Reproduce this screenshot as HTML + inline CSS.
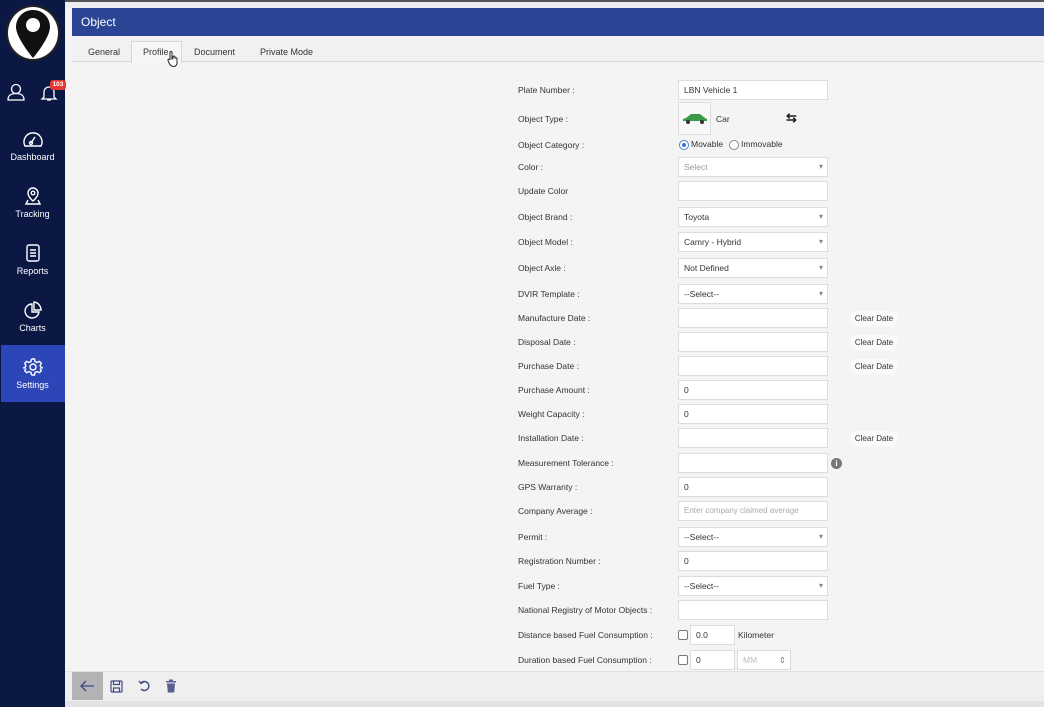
<!DOCTYPE html>
<html><head><meta charset="utf-8"><style>
*{box-sizing:border-box;margin:0;padding:0}
body{width:1044px;height:707px;overflow:hidden;background:#f4f4f5;font-family:"Liberation Sans",sans-serif;position:relative;color:#333}
.a{position:absolute}
.sb{left:0;top:0;width:65px;height:707px;background:#0b1844}
.nav{position:absolute;left:0;width:65px;text-align:center;color:#fff;font-size:9px}
.lbl{position:absolute;left:518px;font-size:8.5px;color:#333;line-height:12px}
.in{position:absolute;left:678px;width:150px;height:20px;background:#fff;border:1px solid #dcdcdc;font-size:8.5px;line-height:18px;padding-left:5px;color:#333}
.sel::after{content:"▾";position:absolute;right:4px;top:0;font-size:8px;color:#888}
.cd{position:absolute;left:850px;width:48px;height:15px;background:#fafafa;border-radius:7px;font-size:8px;line-height:15px;text-align:center;color:#333}
</style></head><body>
<div class="a" style="left:0;top:0;width:1044px;height:2px;background:#555"></div>
<div class="a" style="left:65px;top:2px;width:979px;height:6px;background:#eceef4"></div>
<div class="a sb"></div>
<div class="a" style="left:6px;top:5px;width:54px;height:56px;border-radius:50%;background:#fff;border:2px solid #222"></div>
<svg class="a" style="left:13px;top:8px" width="40" height="52" viewBox="0 0 40 52"><path d="M20 2C10 2 3 10 3 19c0 11 17 31 17 31s17-20 17-31C37 10 30 2 20 2z" fill="#111"/><circle cx="20" cy="17" r="7" fill="#fff"/></svg>
<svg class="a" style="left:6px;top:82px" width="20" height="20" viewBox="0 0 20 20" fill="none" stroke="#fff" stroke-width="1.3"><circle cx="10" cy="7" r="4.5"/><path d="M2 18c0-5 3-6.5 8-6.5s8 1.5 8 6.5z"/></svg>
<svg class="a" style="left:40px;top:84px" width="18" height="18" viewBox="0 0 18 18" fill="none" stroke="#fff" stroke-width="1.3"><path d="M4 13V8a5 5 0 0 1 10 0v5l2 2H2z"/><path d="M7 16h4"/></svg>
<div class="a" style="left:50px;top:80px;width:16px;height:10px;background:#e53935;border-radius:3px;color:#fff;font-size:6.5px;line-height:10px;text-align:center;font-weight:bold">103</div>
<svg class="a" style="left:22px;top:128px" width="22" height="22" viewBox="0 0 22 22" fill="none" stroke="#fff" stroke-width="1.4"><path d="M3 18a9 9 0 1 1 16 0z"/><path d="M9 15l4-6"/><circle cx="9" cy="15" r="1.5"/></svg>
<div class="nav" style="top:152px">Dashboard</div>
<svg class="a" style="left:24px;top:186px" width="18" height="20" viewBox="0 0 18 20" fill="none" stroke="#fff" stroke-width="1.4"><path d="M9 2a5 5 0 0 0-5 5c0 4 5 8 5 8s5-4 5-8a5 5 0 0 0-5-5z"/><circle cx="9" cy="7" r="1.8"/><path d="M4 14l-2 4h14l-2-4"/></svg>
<div class="nav" style="top:209px">Tracking</div>
<svg class="a" style="left:25px;top:243px" width="16" height="20" viewBox="0 0 16 20" fill="none" stroke="#fff" stroke-width="1.4"><rect x="2" y="2" width="12" height="16" rx="2"/><path d="M5 7h6M5 10h6M5 13h6"/></svg>
<div class="nav" style="top:266px">Reports</div>
<svg class="a" style="left:23px;top:300px" width="20" height="20" viewBox="0 0 20 20" fill="none" stroke="#fff" stroke-width="1.4"><path d="M9 4a7 7 0 1 0 7 8H9z"/><path d="M11 2v8h7a8 8 0 0 0-7-8z"/></svg>
<div class="nav" style="top:323px">Charts</div>
<div class="a" style="left:1px;top:345px;width:64px;height:57px;background:#2c46b8"></div>
<svg class="a" style="left:23px;top:357px" width="20" height="20" viewBox="0 0 20 20" fill="none" stroke="#fff" stroke-width="1.4"><circle cx="10" cy="10" r="3"/><path d="M8.5 2h3l.5 2.5 2 1 2.3-1.2 2 2-1.2 2.3 1 2L20.5 11v-2M8.5 2l-.5 2.5-2 1-2.3-1.2-2 2 1.2 2.3-1 2L-.5 11M8.5 18h3l.5-2.5 2-1 2.3 1.2 2-2-1.2-2.3M8.5 18l-.5-2.5-2-1-2.3 1.2-2-2 1.2-2.3"/></svg>
<div class="nav" style="top:380px">Settings</div>

<div class="a" style="left:72px;top:8px;width:972px;height:28px;background:#2b4494;color:#fff;font-size:12px;line-height:28px;padding-left:9px">Object</div>
<div class="a" style="left:72px;top:36px;width:972px;height:26px;background:#f1f1f3;border-bottom:1px solid #d8d8d8"></div>
<div class="a" style="left:131px;top:41px;width:51px;height:22px;background:#f6f6f7;border:1px solid #d8d8d8;border-bottom:none"></div>
<div class="a" style="left:88px;top:47px;font-size:9px;color:#333">General</div>
<div class="a" style="left:143px;top:47px;font-size:9px;color:#333">Profile</div>
<div class="a" style="left:194px;top:47px;font-size:9px;color:#333">Document</div>
<div class="a" style="left:260px;top:47px;font-size:9px;color:#333">Private Mode</div>
<svg class="a" style="left:167px;top:51px" width="12" height="16" viewBox="0 0 12 16" fill="#fff" stroke="#222" stroke-width="1"><path d="M3 1.5a1 1 0 0 1 2 0V8l1-.5V6a1 1 0 0 1 2 0v1.5a1 1 0 0 1 2 .5v4c0 2-1.5 3.5-3.5 3.5S3 14 2 12L1 9.5a1 1 0 0 1 2-.5z"/></svg>

<div class="lbl" style="top:84px">Plate Number :</div><div class="in" style="top:80px">LBN Vehicle 1</div>
<div class="lbl" style="top:113px">Object Type :</div>
<div class="a" style="left:678px;top:102px;width:33px;height:33px;background:#f8f8f8;border:1px solid #ddd"></div>
<svg class="a" style="left:682px;top:113px" width="26" height="12" viewBox="0 0 26 12"><path d="M1 8V6l3-1 5-4h9l5 4 2 1v2z" fill="#3a9a45"/><circle cx="6" cy="9" r="2" fill="#333"/><circle cx="20" cy="9" r="2" fill="#333"/></svg>
<div class="a" style="left:716px;top:114px;font-size:8.5px">Car</div>
<div class="a" style="left:786px;top:110px;font-size:13px;font-weight:bold;color:#222">⇆</div>
<div class="lbl" style="top:139px">Object Category :</div>
<div class="a" style="left:679px;top:140px;width:10px;height:10px;border-radius:50%;border:1px solid #4a7fd6;background:#fff"></div>
<div class="a" style="left:682px;top:143px;width:4px;height:4px;border-radius:50%;background:#3b73d8"></div>
<div class="a" style="left:691px;top:139px;font-size:8.5px">Movable</div>
<div class="a" style="left:729px;top:140px;width:10px;height:10px;border-radius:50%;border:1px solid #888;background:#fff"></div>
<div class="a" style="left:741px;top:139px;font-size:8.5px">Immovable</div>
<div class="lbl" style="top:161px">Color :</div><div class="in sel" style="top:157px;color:#999">Select</div>
<div class="lbl" style="top:185px">Update Color</div><div class="in" style="top:181px"></div>
<div class="lbl" style="top:211px">Object Brand :</div><div class="in sel" style="top:207px">Toyota</div>
<div class="lbl" style="top:236px">Object Model :</div><div class="in sel" style="top:232px">Camry - Hybrid</div>
<div class="lbl" style="top:262px">Object Axle :</div><div class="in sel" style="top:258px">Not Defined</div>
<div class="lbl" style="top:288px">DVIR Template :</div><div class="in sel" style="top:284px">--Select--</div>
<div class="lbl" style="top:312px">Manufacture Date :</div><div class="in" style="top:308px"></div><div class="cd" style="top:311px">Clear Date</div>
<div class="lbl" style="top:336px">Disposal Date :</div><div class="in" style="top:332px"></div><div class="cd" style="top:335px">Clear Date</div>
<div class="lbl" style="top:360px">Purchase Date :</div><div class="in" style="top:356px"></div><div class="cd" style="top:359px">Clear Date</div>
<div class="lbl" style="top:384px">Purchase Amount :</div><div class="in" style="top:380px">0</div>
<div class="lbl" style="top:408px">Weight Capacity :</div><div class="in" style="top:404px">0</div>
<div class="lbl" style="top:432px">Installation Date :</div><div class="in" style="top:428px"></div><div class="cd" style="top:431px">Clear Date</div>
<div class="lbl" style="top:457px">Measurement Tolerance :</div><div class="in" style="top:453px"></div>
<div class="a" style="left:831px;top:458px;width:11px;height:11px;border-radius:50%;background:#777;color:#fff;font-size:8px;line-height:11px;text-align:center;font-weight:bold">i</div>
<div class="lbl" style="top:481px">GPS Warranty :</div><div class="in" style="top:477px">0</div>
<div class="lbl" style="top:505px">Company Average :</div><div class="in" style="top:501px;color:#aaa;font-size:8px">Enter company claimed average</div>
<div class="lbl" style="top:531px">Permit :</div><div class="in sel" style="top:527px">--Select--</div>
<div class="lbl" style="top:555px">Registration Number :</div><div class="in" style="top:551px">0</div>
<div class="lbl" style="top:580px">Fuel Type :</div><div class="in sel" style="top:576px">--Select--</div>
<div class="lbl" style="top:604px">National Registry of Motor Objects :</div><div class="in" style="top:600px"></div>
<div class="lbl" style="top:629px">Distance based Fuel Consumption :</div>
<div class="a" style="left:678px;top:630px;width:10px;height:10px;border:1px solid #777;background:#fff;border-radius:2px"></div>
<div class="in" style="left:690px;top:625px;width:45px">0.0</div>
<div class="a" style="left:738px;top:630px;font-size:8.5px">Kilometer</div>
<div class="lbl" style="top:654px">Duration based Fuel Consumption :</div>
<div class="a" style="left:678px;top:655px;width:10px;height:10px;border:1px solid #777;background:#fff;border-radius:2px"></div>
<div class="in" style="left:690px;top:650px;width:45px">0</div>
<div class="in" style="left:737px;top:650px;width:54px;color:#bbb">MM<span style="position:absolute;right:4px;color:#888">⇕</span></div>

<div class="a" style="left:65px;top:671px;width:979px;height:30px;background:#efeff0;border-top:1px solid #e2e2e2"></div>
<div class="a" style="left:65px;top:701px;width:979px;height:6px;background:#e4e4e6"></div>
<div class="a" style="left:72px;top:672px;width:31px;height:28px;background:#b3b3b5"></div>
<svg class="a" style="left:79px;top:679px" width="16" height="14" viewBox="0 0 16 14" fill="none" stroke="#3e4a86" stroke-width="1.3"><path d="M15 7H2M7 2L2 7l5 5"/></svg>
<svg class="a" style="left:110px;top:680px" width="13" height="13" viewBox="0 0 13 13" fill="none" stroke="#3e4a86" stroke-width="1.2"><rect x="1" y="1" width="11" height="11" rx="1"/><path d="M3.5 1v3.5h6V1M3.5 12V8h6v4"/></svg>
<svg class="a" style="left:138px;top:679px" width="13" height="14" viewBox="0 0 13 14" fill="none" stroke="#3e4a86" stroke-width="1.4"><path d="M3 4a4.5 4.5 0 1 1 0 6"/><path d="M1 2l2 2.5 2.5-1.5"/></svg>
<svg class="a" style="left:165px;top:679px" width="12" height="14" viewBox="0 0 12 14" fill="#5a6190"><rect x="1" y="2" width="10" height="1.5"/><rect x="4" y="0.5" width="4" height="1.5"/><path d="M2 4.5h8l-.8 9H2.8z"/></svg>
</body></html>
